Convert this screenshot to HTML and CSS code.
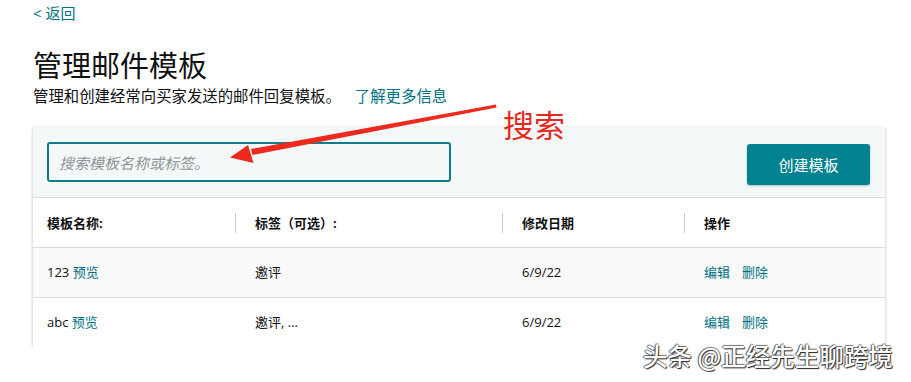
FILE: index.html
```html
<!DOCTYPE html>
<html>
<head>
	<title>管理邮件模板</title>
	<meta charset="UTF-8">
	<link rel="stylesheet" href="styles.css">
</head>
<body>

<div class="page">
	<a class="back" href="#">&lt; 返回</a>
	<h1>管理邮件模板</h1>
	<p class="intro">管理和创建经常向买家发送的邮件回复模板。<a href="#">了解更多信息</a></p>

	<div class="card">
		<div class="toolbar">
			<input class="search" type="text" placeholder="搜索模板名称或标签。">
			<button class="create">创建模板</button>
		</div>
		<div class="row head">
			<div class="cell">模板名称:</div>
			<div class="cell sep">标签（可选）:</div>
			<div class="cell sep">修改日期</div>
			<div class="cell sep">操作</div>
		</div>
		<div class="row shade">
			<div class="cell">123 <a href="#">预览</a></div>
			<div class="cell">邀评</div>
			<div class="cell">6/9/22</div>
			<div class="cell actions"><a href="#">编辑</a><a href="#">删除</a></div>
		</div>
		<div class="row">
			<div class="cell">abc <a href="#">预览</a></div>
			<div class="cell">邀评, ...</div>
			<div class="cell">6/9/22</div>
			<div class="cell actions"><a href="#">编辑</a><a href="#">删除</a></div>
		</div>
	</div>
</div>

<!-- annotation drawn over the screenshot -->
<svg class="arrow" width="911" height="382" viewBox="0 0 911 382">
	<polygon points="496,104.5 496.5,107.5 252.5,155 251,149" fill="#ee2a1f"/>
	<polygon points="230,157.5 248,145 253.5,163" fill="#ee2a1f"/>
</svg>
<div class="note">搜索</div>
<div class="mark">头条 @正经先生聊跨境</div>

</body>
</html>
```

FILE: styles.css
```css
html
{
	background:white;
}
body
{
	margin:0;
	font-family:"Open Sans", "Noto Sans CJK SC", sans-serif;
	color:#0f1111;
}
a
{
	color:#007185;
	text-decoration:none;
}
.page
{
	padding:0 26px 0 33px;
}
.back
{
	display:block;
	font-size:15px;
	line-height:26px;
}
h1
{
	margin:18px 0 0 0;
	font-size:29px;
	line-height:40px;
	font-weight:normal;
	font-family:"Noto Sans CJK SC", sans-serif;
}
.intro
{
	margin:2px 0 0 0;
	font-size:15.4px;
	line-height:22px;
}
.intro a
{
	margin-left:14px;
}
.card
{
	margin-top:19px;
	background:white;
	box-shadow:0 1px 3px rgba(0,0,0,0.28);
}
.toolbar
{
	display:flex;
	justify-content:space-between;
	align-items:flex-start;
	padding:15px 15px 0 14px;
	height:55px;
	background:#f5f8f9;
	border-bottom:1px solid #dddddd;
}
.search
{
	box-sizing:border-box;
	width:404px;
	height:40px;
	margin:0;
	padding:0 10px;
	border:2px solid #0e7f8a;
	border-radius:3px;
	background:#f5f8f9;
	font-family:"Noto Sans CJK SC", sans-serif;
	font-size:15px;
	font-style:italic;
	outline:none;
}
.search::placeholder
{
	color:#8d9696;
}
.create
{
	margin-top:2px;
	width:123px;
	height:41px;
	border:0;
	border-radius:3px;
	background:#008291;
	color:white;
	font-family:"Noto Sans CJK SC", sans-serif;
	font-size:15px;
	box-shadow:0 1px 2px rgba(0,0,0,0.25);
}
.row
{
	display:grid;
	grid-template-columns:202px 267px 182px 1fr;
	height:49px;
	align-items:center;
	font-size:13px;
	line-height:18px;
	border-bottom:1px solid #dddddd;
}
.row:last-child
{
	border-bottom:0;
	height:49px;
}
.shade
{
	background:#fafafa;
}
.cell
{
	padding-left:20px;
	padding-bottom:2px;
}
.cell:first-child
{
	padding-left:14px;
}
.head .cell
{
	font-weight:bold;
	padding-bottom:0;
}
.sep
{
	border-left:1px solid #cccccc;
	line-height:20px;
	padding-left:19px;
}
.actions a
{
	margin-right:12px;
}
.arrow
{
	position:absolute;
	left:0;
	top:0;
	pointer-events:none;
}
.note
{
	position:absolute;
	left:503px;
	top:104px;
	font-family:"Noto Sans CJK SC", sans-serif;
	font-size:31px;
	line-height:40px;
	color:#e8271d;
}
.mark
{
	position:absolute;
	left:643px;
	top:339px;
	font-family:"Noto Sans CJK SC", sans-serif;
	font-size:24.5px;
	line-height:34px;
	font-weight:500;
	color:white;
	text-shadow:1px 1px 1px #222222, -1px 0 1px #555555, 0 -1px 1px #777777;
}
```
